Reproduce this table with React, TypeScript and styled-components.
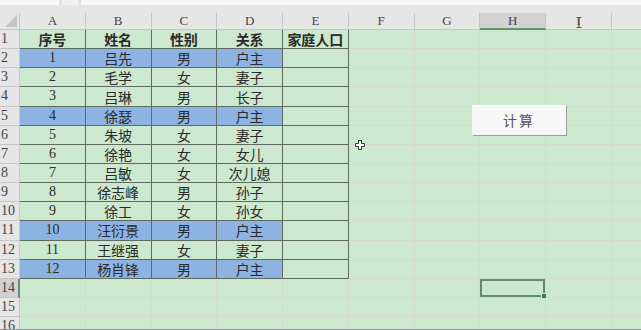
import styled, { createGlobalStyle } from "styled-components";

const GREEN = "#cce8cf";
const BLUE = "#8db3e2";
const HEAD = "#e6e6e6";

const COLS = ["A", "B", "C", "D", "E", "F", "G", "H", "I", ""];

// 序号, 姓名, 性别, 关系, 是否户主
const PEOPLE: [string, string, string, string, boolean][] = [
  ["1", "吕先", "男", "户主", true],
  ["2", "毛学", "女", "妻子", false],
  ["3", "吕琳", "男", "长子", false],
  ["4", "徐瑟", "男", "户主", true],
  ["5", "朱坡", "女", "妻子", false],
  ["6", "徐艳", "女", "女儿", false],
  ["7", "吕敏", "女", "次儿媳", false],
  ["8", "徐志峰", "男", "孙子", false],
  ["9", "徐工", "女", "孙女", false],
  ["10", "汪衍景", "男", "户主", true],
  ["11", "王继强", "女", "妻子", false],
  ["12", "杨肖锋", "男", "户主", true],
];

const TOTAL_ROWS = 16;
const SELECTED = { row: 14, col: 7 };

const GlobalStyle = createGlobalStyle`
  html, body {
    margin: 0;
    padding: 0;
    background: ${GREEN};
  }
`;

export default function App() {
  const rows: { cells: string[]; head: boolean[]; bold: boolean }[] = [];
  rows.push({
    cells: ["序号", "姓名", "性别", "关系", "家庭人口"],
    head: [false, false, false, false, false],
    bold: true,
  });
  PEOPLE.forEach(([no, name, sex, rel, isHead]) => {
    rows.push({
      cells: [no, name, sex, rel, ""],
      head: [isHead, isHead, isHead, isHead, false],
      bold: false,
    });
  });

  return (
    <>
      <GlobalStyle />
      <St.Sheet>
        <St.FormulaStrip>
          <St.NameBox />
          <St.FxBox />
          <St.InputBox />
        </St.FormulaStrip>
        <St.Band />
        <St.Grid>
          <St.Corner />
          {COLS.map((c, i) => (
            <St.ColHead key={c + i} $active={i === SELECTED.col}>
              {c}
            </St.ColHead>
          ))}
          {Array.from({ length: TOTAL_ROWS }, (_, r) => {
            const rowNo = r + 1;
            const data = rows[r];
            return [
              <St.RowHead key={`h${rowNo}`} $active={rowNo === SELECTED.row}>
                {rowNo}
              </St.RowHead>,
              ...COLS.map((_, c) => {
                const inTable = !!data && c < 5;
                return (
                  <St.Cell
                    key={`${rowNo}-${c}`}
                    $blue={inTable && data.head[c]}
                    $dark={inTable}
                    $bold={!!data && data.bold}
                    $selected={rowNo === SELECTED.row && c === SELECTED.col}
                  >
                    {inTable ? data.cells[c] : ""}
                  </St.Cell>
                );
              }),
            ];
          })}
        </St.Grid>
        <St.CalcButton>计算</St.CalcButton>
        <St.CrossCursor width="10" height="10" viewBox="0 0 10 10">
          <path
            d="M3.5 0.5h3v3h3v3h-3v3h-3v-3h-3v-3h3z"
            fill="#fff"
            stroke="#333"
            strokeWidth="1"
          />
        </St.CrossCursor>
        <St.Beam width="6" height="11" viewBox="0 0 6 11">
          <path d="M0.5 0.5h5M3 0.5v10M0.5 10.5h5" stroke="#6b5a2e" strokeWidth="1.2" fill="none" />
        </St.Beam>
      </St.Sheet>
    </>
  );
}

const St = {
  Sheet: styled.div`
    position: relative;
    width: 641px;
    height: 330px;
    overflow: hidden;
    background: ${GREEN};
    border-bottom: 1px solid #9a9a9a;
    box-sizing: border-box;
  `,
  FormulaStrip: styled.div`
    height: 5px;
    display: flex;
    gap: 3px;
    background: #e2e2e2;
  `,
  NameBox: styled.div`
    width: 59px;
    background: #f8f8f8;
  `,
  FxBox: styled.div`
    width: 16px;
    background: #f0f0f0;
  `,
  InputBox: styled.div`
    flex: 1;
    background: #f8f8f8;
  `,
  Band: styled.div`
    height: 8px;
    background: ${HEAD};
  `,
  Grid: styled.div`
    display: grid;
    grid-template-columns: 20px repeat(10, 65.75px);
    grid-template-rows: 17px;
    grid-auto-rows: 19.15px;
  `,
  Corner: styled.div`
    position: relative;
    background: ${HEAD};
    border-right: 1px solid #c6c6c6;
    border-bottom: 1px solid #c6c6c6;

    &::after {
      content: "";
      position: absolute;
      right: 2px;
      bottom: 2px;
      width: 12px;
      height: 12px;
      background: #c4c4c4;
      clip-path: polygon(100% 0, 100% 100%, 0 100%);
    }
  `,
  ColHead: styled.div<{ $active: boolean }>`
    display: flex;
    align-items: center;
    justify-content: center;
    background: ${({ $active }) => ($active ? "#d2d2d2" : HEAD)};
    border-right: 1px solid #c6c6c6;
    border-bottom: ${({ $active }) => ($active ? "2px solid #5f9270" : "1px solid #c6c6c6")};
    font-family: "Liberation Serif", serif;
    font-size: 13px;
    color: #444;
  `,
  RowHead: styled.div<{ $active: boolean }>`
    display: flex;
    align-items: center;
    padding-left: 1px;
    background: ${({ $active }) => ($active ? "#d2d2d2" : HEAD)};
    border-right: ${({ $active }) => ($active ? "2px solid #5f9270" : "1px solid #c6c6c6")};
    border-bottom: 1px solid #c6c6c6;
    font-family: "Liberation Serif", serif;
    font-size: 14px;
    color: #444;
    overflow: hidden;
  `,
  Cell: styled.div<{ $blue: boolean; $dark: boolean; $bold: boolean; $selected: boolean }>`
    position: relative;
    display: flex;
    align-items: center;
    justify-content: center;
    background: ${({ $blue }) => ($blue ? BLUE : GREEN)};
    border-right: 1px solid ${({ $dark }) => ($dark ? "#5e6a60" : "#d3dad3")};
    border-bottom: 1px solid ${({ $dark }) => ($dark ? "#5e6a60" : "#d3dad3")};
    font-family: "Liberation Serif", "Noto Sans CJK SC", serif;
    font-size: 14px;
    font-weight: ${({ $bold }) => ($bold ? 700 : 400)};
    color: #2a2a2a;
    white-space: nowrap;
    box-shadow: ${({ $selected }) => ($selected ? "inset 0 0 0 2px #5f8a6c" : "none")};

    &::after {
      content: "";
      display: ${({ $selected }) => ($selected ? "block" : "none")};
      position: absolute;
      right: -2px;
      bottom: -2px;
      width: 4px;
      height: 4px;
      background: #3f7a50;
      border: 1px solid ${GREEN};
    }
  `,
  CalcButton: styled.button`
    position: absolute;
    left: 472px;
    top: 105px;
    width: 94px;
    height: 30px;
    padding: 0;
    border: none;
    background: #f7f7f7;
    box-shadow: 1px 1px 0 #9c9c9c;
    font-family: "Noto Sans CJK SC", sans-serif;
    font-size: 14px;
    letter-spacing: 2px;
    color: #555;
  `,
  CrossCursor: styled.svg`
    position: absolute;
    left: 355px;
    top: 140px;
  `,
  Beam: styled.svg`
    position: absolute;
    left: 576px;
    top: 17px;
  `,
};
